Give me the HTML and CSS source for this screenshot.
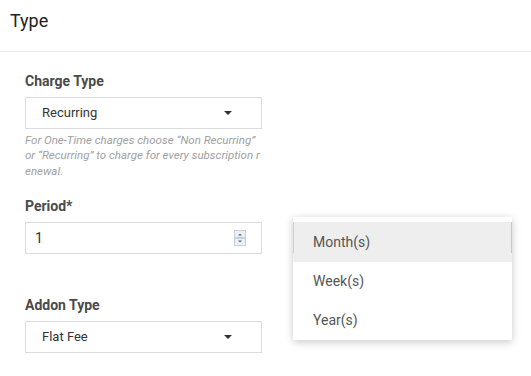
FILE: index.html
```html
<!DOCTYPE html>
<html lang="en">
<head>
  <meta charset="UTF-8">
  <title>Addon Type</title>
  <link rel="stylesheet" href="styles.css">
</head>
<body>

  <div class="header">Type</div>

  <div class="form">
    <div class="field">
      <div class="label">Charge Type</div>
      <div class="select">Recurring <span class="caret"></span></div>
      <div class="help">For One-Time charges choose “Non Recurring” or “Recurring” to charge for every subscription renewal.</div>
    </div>

    <div class="row">
      <div class="field">
        <div class="label">Period*</div>
        <div class="input">1
          <svg class="spin" width="12" height="16" viewBox="0 0 12 16">
            <rect x="0.5" y="0.5" width="11" height="7" fill="#eceff3" stroke="#c9ced6"/>
            <rect x="0.5" y="8.5" width="11" height="7" fill="#eceff3" stroke="#c9ced6"/>
            <path d="M4 5.5 L6 3.5 L8 5.5 Z" fill="#5b6f8c"/>
            <path d="M4 10.5 L8 10.5 L6 12.5 Z" fill="#5b6f8c"/>
          </svg>
        </div>
      </div>
      <div class="unit">
        <div class="select hidden-select"></div>
        <ul class="menu">
          <li class="active">Month(s)</li>
          <li>Week(s)</li>
          <li>Year(s)</li>
        </ul>
      </div>
    </div>

    <div class="field addon">
      <div class="label">Addon Type</div>
      <div class="select">Flat Fee <span class="caret"></span></div>
    </div>
  </div>

</body>
</html>
```

FILE: styles.css
```css
body {
  margin: 0;
  background: #fff;
  font-family: Roboto, "Liberation Sans", sans-serif;
  color: #333;
  overflow: hidden;
}
.header {
  box-sizing: border-box;
  height: 52px;
  padding: 10px 0 0 10px;
  font-size: 18px;
  line-height: 22px;
  color: #222;
  border-bottom: 1px solid #e8e8e8;
}
.form {
  padding: 21px 0 0 25px;
}
.field {
  width: 237px;
}
.label {
  font-size: 14px;
  font-weight: bold;
  line-height: 17px;
  color: #4a4a4a;
  margin-bottom: 7px;
}
.select, .input {
  position: relative;
  box-sizing: border-box;
  height: 32px;
  border: 1px solid #dcdcdc;
  padding: 0 0 0 16px;
  font-size: 13px;
  line-height: 30px;
  color: #333;
}
.input {
  padding-left: 9px;
  font-size: 14px;
}
.caret {
  position: absolute;
  right: 29px;
  top: 13px;
  border-left: 4px solid transparent;
  border-right: 4px solid transparent;
  border-top: 4px solid #333;
}
.spin {
  position: absolute;
  right: 15px;
  top: 7px;
}
.help {
  margin-top: 4px;
  font-size: 11.5px;
  font-style: italic;
  line-height: 15.3px;
  color: #a0a0a0;
  word-break: break-all;
}
.row {
  display: flex;
  gap: 31px;
  margin-top: 19px;
}
.unit {
  position: relative;
  width: 219px;
  padding-top: 24px;
}
.hidden-select {
  border-color: #cfcfcf;
}
.menu {
  position: absolute;
  left: 0;
  top: 19px;
  width: 219px;
  margin: 0;
  padding: 5px 0 0;
  list-style: none;
  background: #fff;
  box-shadow: 0 2px 8px rgba(0, 0, 0, 0.22);
}
.menu li {
  position: relative;
  height: 39px;
  padding-left: 20px;
  font-size: 14px;
  line-height: 39px;
  color: #555;
}
.menu li.active {
  height: 40px;
  line-height: 40px;
  background: #eeeeee;
}
.menu li.active::before {
  content: "";
  position: absolute;
  left: 0;
  right: 0;
  top: 0;
  height: 31px;
  border-left: 1px solid #d0d0d0;
  border-right: 1px solid #c8c8c8;
}
.addon {
  margin-top: 43px;
}
```
